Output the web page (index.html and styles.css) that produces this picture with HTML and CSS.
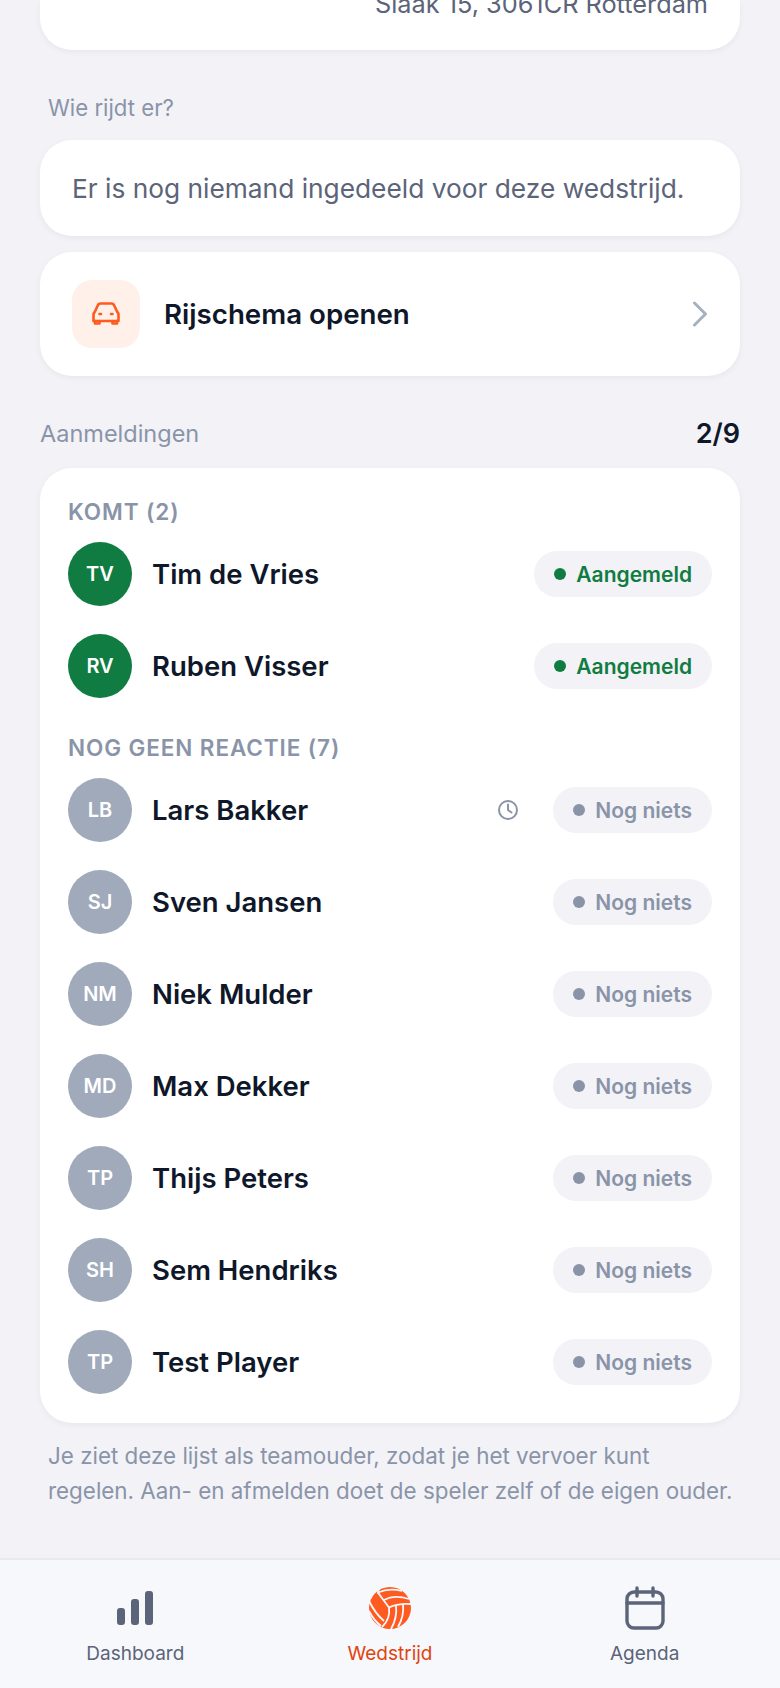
FILE: index.html
```html
<!DOCTYPE html>
<html lang="nl">
<head>
  <meta charset="UTF-8">
  <title>Wedstrijd</title>
  <link rel="stylesheet" href="styles.css">
</head>
<body>
  <div class="scherm">
    <main class="inhoud">
      <div class="kaart kaart-adres"><span>Slaak 15, 3061CR Rotterdam</span></div>

      <p class="kopje kopje-inspring">Wie rijdt er?</p>
      <div class="kaart kaart-leeg">Er is nog niemand ingedeeld voor deze wedstrijd.</div>

      <div class="kaart kaart-link">
        <div class="icoon-vak">
          <svg width="30" height="24" viewBox="0 0 30 24" fill="none" stroke="#ff5a1f" stroke-width="2.6" stroke-linejoin="round" stroke-linecap="round">
            <path d="M2.500 19v-6C2.500 11.500 3 10.500 4 9.500L6.500 4C7 2.500 8 1.500 9.500 1.500h11c1.500 0 2.500 1 3 2.500L26 9.500c1 1 1.500 2 1.500 3.500v6Z"/>
            <path d="M4 19v2.500h4.500V19M21.500 19v2.500H26V19"/>
            <path d="M8.500 12h1.500M20 12h1.500"/>
          </svg>
        </div>
        <span class="link-tekst">Rijschema openen</span>
        <svg class="pijl" width="16" height="26" viewBox="0 0 16 26" fill="none" stroke="#a7b0c0" stroke-width="3" stroke-linecap="round" stroke-linejoin="round">
          <path d="M2.500 2 13.500 13 2.500 24"/>
        </svg>
      </div>

      <div class="kop-rij">
        <p class="kopje kopje-groot">Aanmeldingen</p>
        <span class="teller">2/9</span>
      </div>

      <div class="kaart kaart-lijst">
        <h2 class="groep">KOMT (2)</h2>
        <div class="rij">
          <div class="avatar groen">TV</div>
          <span class="naam">Tim de Vries</span>
          <span class="pil pil-groen"><i class="stip"></i>Aangemeld</span>
        </div>
        <div class="rij">
          <div class="avatar groen">RV</div>
          <span class="naam">Ruben Visser</span>
          <span class="pil pil-groen"><i class="stip"></i>Aangemeld</span>
        </div>

        <h2 class="groep groep-twee">NOG GEEN REACTIE (7)</h2>
        <div class="rij">
          <div class="avatar">LB</div>
          <span class="naam">Lars Bakker</span>
          <svg class="klok" width="22" height="22" viewBox="0 0 22 22" fill="none" stroke="#8a94a8" stroke-width="2" stroke-linecap="round" stroke-linejoin="round">
            <circle cx="11" cy="11" r="9"/>
            <path d="M11 5.500V11l3.500 2.500"/>
          </svg>
          <span class="pil"><i class="stip"></i>Nog niets</span>
        </div>
        <div class="rij">
          <div class="avatar">SJ</div>
          <span class="naam">Sven Jansen</span>
          <span class="pil"><i class="stip"></i>Nog niets</span>
        </div>
        <div class="rij">
          <div class="avatar">NM</div>
          <span class="naam">Niek Mulder</span>
          <span class="pil"><i class="stip"></i>Nog niets</span>
        </div>
        <div class="rij">
          <div class="avatar">MD</div>
          <span class="naam">Max Dekker</span>
          <span class="pil"><i class="stip"></i>Nog niets</span>
        </div>
        <div class="rij">
          <div class="avatar">TP</div>
          <span class="naam">Thijs Peters</span>
          <span class="pil"><i class="stip"></i>Nog niets</span>
        </div>
        <div class="rij">
          <div class="avatar">SH</div>
          <span class="naam">Sem Hendriks</span>
          <span class="pil"><i class="stip"></i>Nog niets</span>
        </div>
        <div class="rij">
          <div class="avatar">TP</div>
          <span class="naam">Test Player</span>
          <span class="pil"><i class="stip"></i>Nog niets</span>
        </div>
      </div>

      <p class="voetnoot">Je ziet deze lijst als teamouder, zodat je het vervoer kunt regelen. Aan- en afmelden doet de speler zelf of de eigen ouder.</p>
    </main>

    <nav class="menu">
      <div class="menu-item">
        <svg width="44" height="44" viewBox="0 0 44 44" fill="#5b6479">
          <rect x="4" y="22" width="8" height="17" rx="3"/>
          <rect x="18" y="13" width="8" height="26" rx="3"/>
          <rect x="32" y="5" width="8" height="34" rx="3"/>
        </svg>
        <span>Dashboard</span>
      </div>
      <div class="menu-item actief">
        <svg width="44" height="44" viewBox="0 0 44 44">
          <circle cx="22" cy="22" r="21" fill="#ff5a1f"/>
          <g fill="none" stroke="#f7f8fc" stroke-width="1.800">
            <path d="M21 21.500C17 16 13 11 10 6.500"/>
            <path d="M11 1.500 10 6.500C18 3 26 3 34 5"/>
            <path d="M16 14C23 10 32 10 41 13"/>
            <path d="M21 21.500C28 18 35 17.500 43 18"/>
            <path d="M21 21.500C22 28 20 36 14 41"/>
            <path d="M1 15C5 23 10 30 16 35"/>
            <path d="M1 25C4 31 8 36 13 40"/>
            <path d="M28 19.500C29 28 27 36 23 43"/>
            <path d="M35 18.500C36 27 34 34 30 41"/>
          </g>
        </svg>
        <span>Wedstrijd</span>
      </div>
      <div class="menu-item">
        <svg width="44" height="44" viewBox="0 0 44 44" fill="none" stroke="#5b6479" stroke-width="3.400" stroke-linecap="round" stroke-linejoin="round">
          <rect x="4" y="6" width="36" height="36" rx="7"/>
          <path d="M4 17h36M14 2v8M30 2v8"/>
        </svg>
        <span>Agenda</span>
      </div>
    </nav>
  </div>
</body>
</html>
```

FILE: styles.css
```css
* {
  box-sizing: border-box;
}

html, body {
  margin: 0;
  padding: 0;
}

body {
  font-family: 'Inter', 'Noto Sans', sans-serif;
  background-color: #f2f2f7;
  color: #0f172a;
}

.scherm {
  display: flex;
  flex-direction: column;
  width: 780px;
  height: 1688px;
  overflow: hidden;
}

.inhoud {
  flex: 1;
  padding: 0 40px;
}

p {
  margin: 0;
}

.kaart {
  background-color: white;
  border-radius: 32px;
  box-shadow: 0 2px 6px rgba(15, 23, 42, 0.05);
}

/* de pagina is gescrold, van deze kaart is alleen de onderkant te zien */
.kaart-adres {
  height: 50px;
  border-radius: 0 0 32px 32px;
  padding-right: 32px;
  text-align: right;
  font-size: 25.300px;
  line-height: 26px;
  color: #5b6479;
  overflow: hidden;
}

.kaart-adres span {
  display: block;
  margin-top: -9px;
}

.kopje {
  font-size: 22.200px;
  line-height: 30px;
  color: #8a94a8;
}

.kopje-groot {
  font-size: 23.500px;
}

.kopje-inspring {
  margin: 43px 0 17px 8px;
}

.kaart-leeg {
  height: 96px;
  padding: 0 32px;
  display: flex;
  align-items: center;
  font-size: 26.300px;
  color: #5b6479;
}

.kaart-link {
  height: 124px;
  margin-top: 16px;
  padding: 0 32px;
  display: flex;
  align-items: center;
}

.icoon-vak {
  width: 68px;
  height: 68px;
  border-radius: 20px;
  background-color: #fff1e9;
  display: flex;
  align-items: center;
  justify-content: center;
}

.link-tekst {
  flex: 1;
  margin-left: 24px;
  font-size: 27.700px;
  font-weight: 600;
}

.kop-rij {
  display: flex;
  justify-content: space-between;
  align-items: center;
  margin-top: 43px;
  margin-bottom: 19px;
}

.teller {
  font-size: 27px;
  line-height: 30px;
  font-weight: 600;
}

.kaart-lijst {
  height: 955px;
  padding: 29px 28px 0;
}

.groep {
  margin: 0 0 15px;
  font-size: 22.500px;
  line-height: 30px;
  font-weight: 600;
  letter-spacing: 0.9px;
  color: #8a94a8;
}

.groep-twee {
  margin-top: 35px;
}

.rij {
  display: flex;
  align-items: center;
  height: 64px;
  margin-bottom: 28px;
}

.avatar {
  width: 64px;
  height: 64px;
  border-radius: 50%;
  background-color: #a0aabb;
  color: white;
  font-size: 20px;
  font-weight: 600;
  display: flex;
  align-items: center;
  justify-content: center;
}

.avatar.groen {
  background-color: #107c41;
}

.naam {
  flex: 1;
  margin-left: 20px;
  font-size: 27.500px;
  font-weight: 600;
}

.klok {
  margin-right: 34px;
}

.pil {
  display: flex;
  align-items: center;
  height: 46px;
  padding: 0 20px;
  border-radius: 23px;
  background-color: #f2f2f7;
  color: #8a94a8;
  font-size: 21px;
  font-weight: 600;
}

.pil-groen {
  color: #107c41;
}

.stip {
  width: 12px;
  height: 12px;
  margin-right: 10px;
  border-radius: 50%;
  background-color: currentColor;
}

.voetnoot {
  margin: 15px 0 0 8px;
  font-size: 22.400px;
  line-height: 35px;
  color: #8a94a8;
}

.menu {
  height: 130px;
  flex-shrink: 0;
  background-color: #f7f8fc;
  border-top: 2px solid #e8eaf0;
  display: flex;
  padding: 26px 8px 0;
}

.menu-item {
  flex: 1;
  display: flex;
  flex-direction: column;
  align-items: center;
  font-size: 19px;
  line-height: 26px;
  color: #5b6479;
}

.menu-item span {
  margin-top: 11px;
}

.actief {
  color: #e0440e;
}
```
